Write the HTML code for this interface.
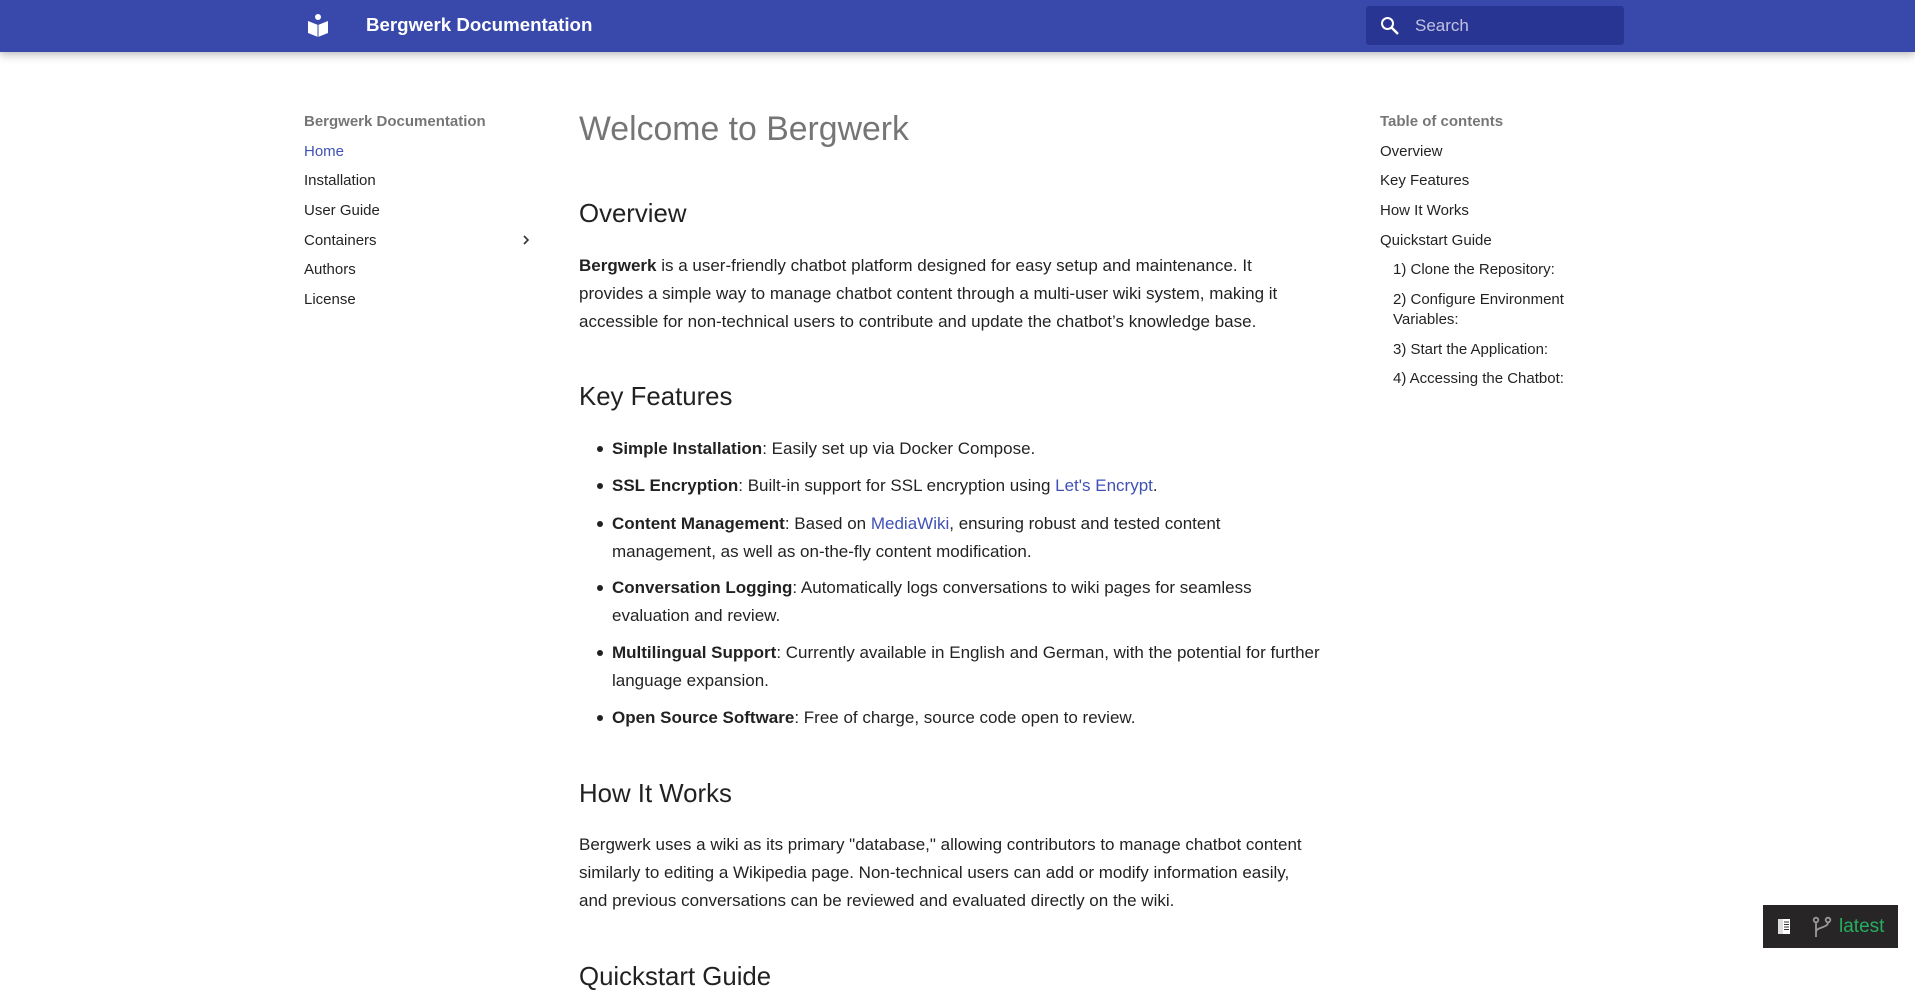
<!DOCTYPE html>
<html><head><meta charset="utf-8"><style>
*{margin:0;padding:0;box-sizing:border-box}
body{width:1915px;height:998px;overflow:hidden;background:#fff;font-family:"Liberation Sans",Roboto,sans-serif;color:rgba(0,0,0,.87);position:relative}
.hdr{position:absolute;left:0;top:0;width:1915px;height:52px;background:#3949ab;box-shadow:0 0 4px rgba(0,0,0,.1),0 4px 8px rgba(0,0,0,.2)}
.title{position:absolute;left:366px;top:14px;color:#fff;font-weight:bold;font-size:18.7px}
.search{position:absolute;left:1366px;top:6px;width:258px;height:39px;background:#283593;border-radius:3px}
.search span{position:absolute;left:49px;top:10px;color:rgba(255,255,255,.7);font-size:17px}
.a{position:absolute;white-space:nowrap}
.nav{font-size:15px}
.navt{font-size:15px;font-weight:bold;color:rgba(0,0,0,.54)}
.h1{font-size:33.8px;font-weight:300;color:rgba(0,0,0,.54)}
.h2{font-size:25.8px;font-weight:300;color:rgba(0,0,0,.87)}
.p{font-size:17px;line-height:28.16px;white-space:nowrap}
.b{font-weight:bold}
a{color:#3f51b5;text-decoration:none}
.dot{position:absolute;left:597px;width:6px;height:6px;border-radius:3px;background:rgba(0,0,0,.87)}
</style></head><body>
<div class="hdr">
<svg style="position:absolute;left:306px;top:13px" width="24" height="24" viewBox="0 0 24 24"><circle cx="12" cy="4" r="3" fill="#fff"/><path d="M2 8 L12 12 L22 8 V20 L12 24 L2 20Z" fill="#fff"/><path d="M12 12 V24" stroke="#3949ab" stroke-width="1"/></svg>
<div class="title">Bergwerk Documentation</div>
<div class="search"><svg style="position:absolute;left:12px;top:8px" width="24" height="24" viewBox="0 0 24 24"><circle cx="9.5" cy="9.5" r="5.5" fill="none" stroke="#fff" stroke-width="2"/><path d="M13.5 13.5 L20 20" stroke="#fff" stroke-width="2.4"/></svg><span>Search</span></div>
</div>

<div class="a navt" style="left:304px;top:113px">Bergwerk Documentation</div>
<div class="a nav" style="left:304px;top:143px;color:#3f51b5">Home</div>
<div class="a nav" style="left:304px;top:172px">Installation</div>
<div class="a nav" style="left:304px;top:202px">User Guide</div>
<div class="a nav" style="left:304px;top:232px">Containers</div>
<svg style="position:absolute;left:519px;top:233px" width="14" height="14" viewBox="0 0 14 14"><path d="M5 3 L9 7 L5 11" fill="none" stroke="rgba(0,0,0,.8)" stroke-width="1.6"/></svg>
<div class="a nav" style="left:304px;top:261px">Authors</div>
<div class="a nav" style="left:304px;top:291px">License</div>

<div class="a navt" style="left:1380px;top:113px">Table of contents</div>
<div class="a nav" style="left:1380px;top:143px">Overview</div>
<div class="a nav" style="left:1380px;top:172px">Key Features</div>
<div class="a nav" style="left:1380px;top:202px">How It Works</div>
<div class="a nav" style="left:1380px;top:232px">Quickstart Guide</div>
<div class="a nav" style="left:1393px;top:261px">1) Clone the Repository:</div>
<div class="a nav" style="left:1393px;top:291px">2) Configure Environment</div>
<div class="a nav" style="left:1393px;top:311px">Variables:</div>
<div class="a nav" style="left:1393px;top:341px">3) Start the Application:</div>
<div class="a nav" style="left:1393px;top:370px">4) Accessing the Chatbot:</div>

<div class="a h1" style="left:579px;top:110px">Welcome to Bergwerk</div>
<div class="a h2" style="left:579px;top:200px">Overview</div>
<div class="a p" style="left:579px;top:252px"><span class="b">Bergwerk</span> is a user-friendly chatbot platform designed for easy setup and maintenance. It<br>provides a simple way to manage chatbot content through a multi-user wiki system, making it<br>accessible for non-technical users to contribute and update the chatbot’s knowledge base.</div>
<div class="a h2" style="left:579px;top:383px">Key Features</div>
<div class="dot" style="top:446px"></div><div class="a p" style="left:612px;top:435px"><span class="b">Simple Installation</span>: Easily set up via Docker Compose.</div>
<div class="dot" style="top:483px"></div><div class="a p" style="left:612px;top:472px"><span class="b">SSL Encryption</span>: Built-in support for SSL encryption using <a>Let's Encrypt</a>.</div>
<div class="dot" style="top:521px"></div><div class="a p" style="left:612px;top:510px"><span class="b">Content Management</span>: Based on <a>MediaWiki</a>, ensuring robust and tested content<br>management, as well as on-the-fly content modification.</div>
<div class="dot" style="top:585px"></div><div class="a p" style="left:612px;top:574px"><span class="b">Conversation Logging</span>: Automatically logs conversations to wiki pages for seamless<br>evaluation and review.</div>
<div class="dot" style="top:650px"></div><div class="a p" style="left:612px;top:639px"><span class="b">Multilingual Support</span>: Currently available in English and German, with the potential for further<br>language expansion.</div>
<div class="dot" style="top:715px"></div><div class="a p" style="left:612px;top:704px"><span class="b">Open Source Software</span>: Free of charge, source code open to review.</div>
<div class="a h2" style="left:579px;top:780px">How It Works</div>
<div class="a p" style="left:579px;top:831px">Bergwerk uses a wiki as its primary "database," allowing contributors to manage chatbot content<br>similarly to editing a Wikipedia page. Non-technical users can add or modify information easily,<br>and previous conversations can be reviewed and evaluated directly on the wiki.</div>
<div class="a h2" style="left:579px;top:963px">Quickstart Guide</div>

<div style="position:absolute;left:1763px;top:905px;width:135px;height:43px;background:#272525">
<svg style="position:absolute;left:14px;top:13px" width="14" height="17" viewBox="0 0 14 17"><rect x="1" y="1" width="12" height="15" fill="#fff"/><rect x="1" y="1" width="5" height="15" fill="#ddd"/><path d="M7 4h5M7 6.5h5M7 9h5M7 11.5h5" stroke="#333" stroke-width="1"/></svg>
<svg style="position:absolute;left:49px;top:11px" width="20" height="22" viewBox="0 0 20 22"><circle cx="4" cy="4" r="2.3" fill="none" stroke="#999" stroke-width="1.8"/><circle cx="16" cy="4" r="2.3" fill="none" stroke="#999" stroke-width="1.8"/><path d="M4 6.5V21M16 6.5 C16 12 4 11 4 16" fill="none" stroke="#999" stroke-width="1.8"/></svg>
<div style="position:absolute;left:76px;top:11px;color:#27ae60;font-size:19px">latest</div>
</div>
</body></html>
